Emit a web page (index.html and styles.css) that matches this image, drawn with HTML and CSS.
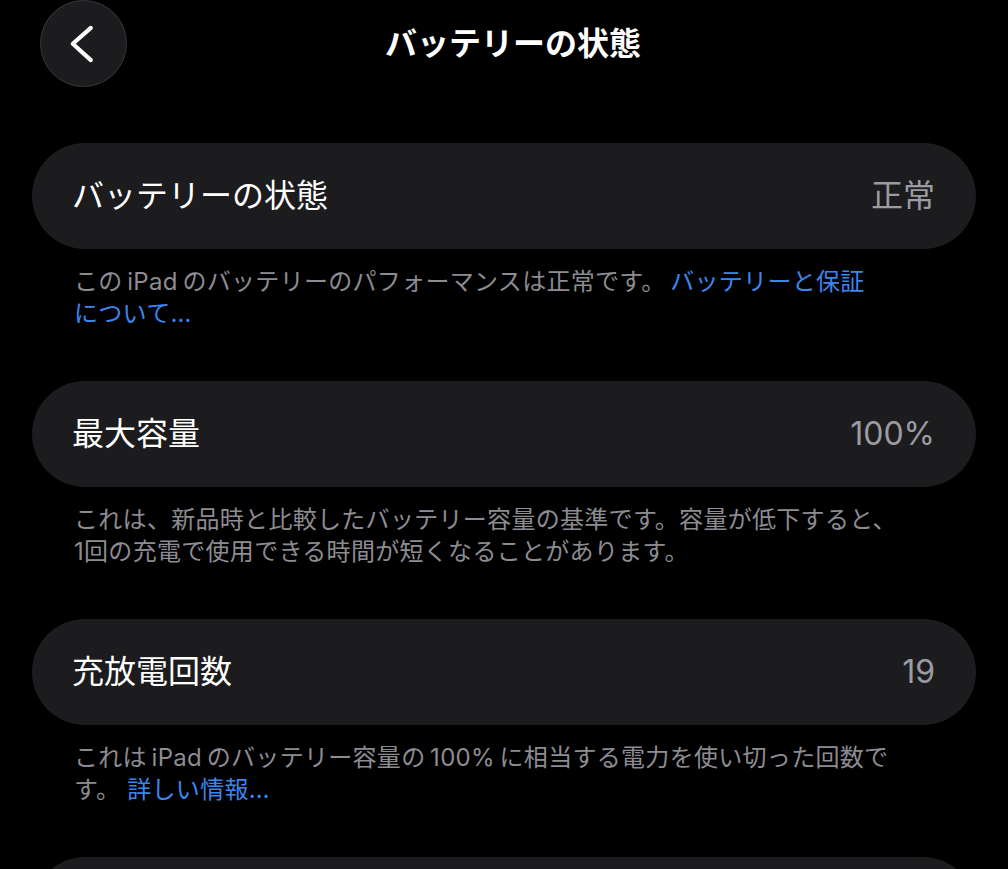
FILE: index.html
```html
<!DOCTYPE html>
<html lang="ja">
<head>
<meta charset="utf-8">
<title>バッテリーの状態</title>
<link rel="stylesheet" href="styles.css">
</head>
<body>
<header class="nav">
  <button class="back" aria-label="戻る">
    <svg width="87" height="87" viewBox="0 0 87 87" aria-hidden="true">
      <path d="M51 27.5 L32.5 43.8 L51 60.5" fill="none" stroke="#ffffff" stroke-width="4.2" stroke-linecap="round" stroke-linejoin="round"/>
    </svg>
  </button>
  <h1 class="title">バッテリーの状態</h1>
</header>

<main class="content">
  <section class="group">
    <div class="cell"><span class="label">バッテリーの状態</span><span class="value">正常</span></div>
    <p class="note">この&#8201;iPad&#8201;のバッテリーのパフォーマンスは正常です。&#8201;<a class="link" href="#">バッテリーと保証<br>について…</a></p>
  </section>

  <section class="group">
    <div class="cell"><span class="label">最大容量</span><span class="value">100%</span></div>
    <p class="note">これは、新品時と比較したバッテリー容量の基準です。容量が低下すると、<br>1回の充電で使用できる時間が短くなることがあります。</p>
  </section>

  <section class="group">
    <div class="cell"><span class="label">充放電回数</span><span class="value">19</span></div>
    <p class="note">これは&#8201;iPad&#8201;のバッテリー容量の&#8201;100%&#8201;に相当する電力を使い切った回数で<br>す。 <a class="link" href="#">詳しい情報…</a></p>
  </section>

  <section class="group">
    <div class="cell" aria-hidden="true"></div>
  </section>
</main>
</body>
</html>
```

FILE: styles.css
```css
* { box-sizing: border-box; }

html, body {
  margin: 0;
  padding: 0;
  background: #000000;
  height: 100%;
  overflow: hidden;
}

body {
  font-family: "Inter", "Noto Sans CJK JP", sans-serif;
  color: #ffffff;
}

.nav {
  display: flex;
  align-items: center;
  height: 87px;
  padding: 0 109px 0 40px;
}

.back {
  width: 87px;
  height: 87px;
  flex: 0 0 87px;
  border-radius: 50%;
  background: #1c1c1e;
  border: 1.5px solid #38383b;
  padding: 0;
  display: flex;
  align-items: center;
  justify-content: center;
}

.back svg { display: block; }

.title {
  flex: 1;
  margin: 0;
  text-align: center;
  font-size: 32px;
  font-weight: 700;
  line-height: 40px;
  letter-spacing: 0;
}

.content {
  padding: 56px 32px 0 32px;
}

.group {
  margin-bottom: 51px;
}

.cell {
  height: 106px;
  border-radius: 53px;
  background: #1c1c1e;
  display: flex;
  align-items: center;
  justify-content: space-between;
  padding: 0 41px 0 40px;
  font-size: 32px;
  line-height: 40px;
}

.label {
  color: #ffffff;
  font-weight: 400;
}

.value {
  color: #9b9ba1;
  font-weight: 400;
}

.note {
  margin: 0;
  padding: 17px 42px 0 42px;
  font-size: 24px;
  line-height: 32px;
  letter-spacing: 0.3px;
  color: #8c8c92;
}

.link {
  color: #3b86ee;
  text-decoration: none;
}
```
